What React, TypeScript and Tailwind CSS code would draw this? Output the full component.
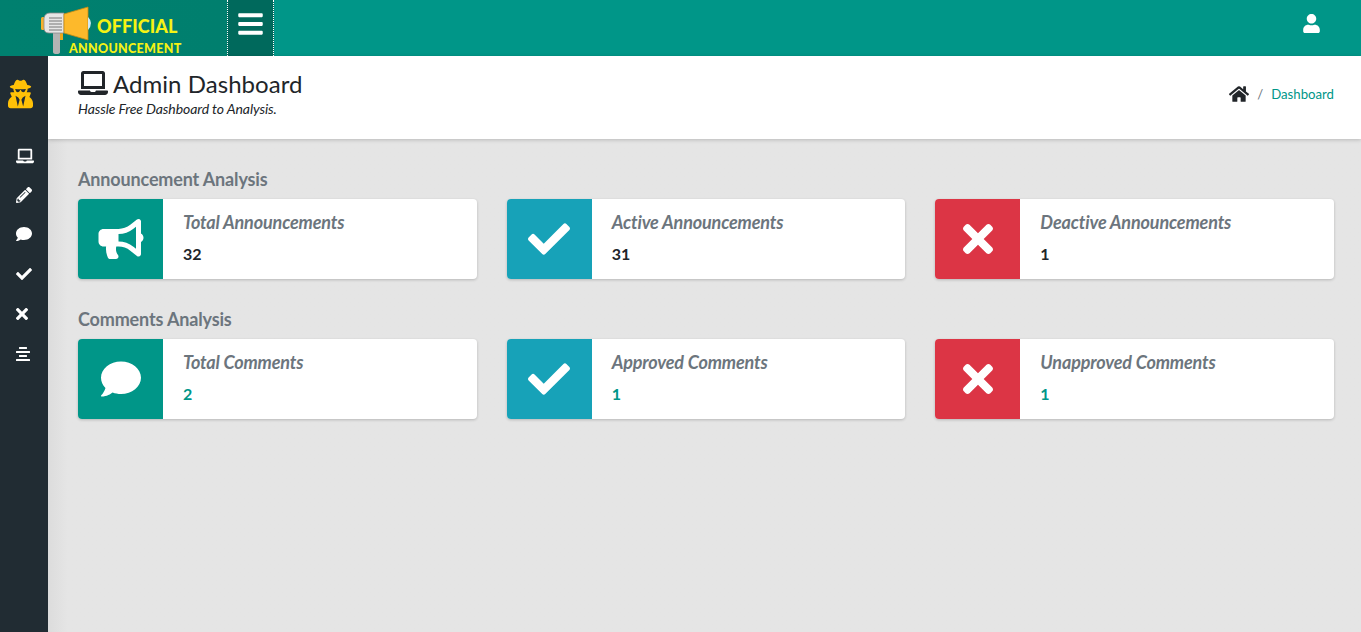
import React from 'react';
import {
  FaAlignCenter,
  FaBars,
  FaBullhorn,
  FaCheck,
  FaComment,
  FaHome,
  FaLaptop,
  FaPencilAlt,
  FaTimes,
  FaUser,
  FaUserSecret,
} from 'react-icons/fa';
import type { IconType } from 'react-icons';

interface StatCardProps {
  icon: IconType;
  iconBg: string;
  iconSize: string;
  title: string;
  value: string;
  valueColor: string;
}

const StatCard: React.FC<StatCardProps> = ({ icon: Icon, iconBg, iconSize, title, value, valueColor }) => (
  <div className="flex h-20 overflow-hidden rounded-[4px] bg-white shadow-[0_1px_3px_rgba(0,0,0,0.2)]">
    <div className={`flex w-[85px] shrink-0 items-center justify-center text-white ${iconBg}`}>
      <Icon className={iconSize} />
    </div>
    <div className="pl-[20px] pt-[12px]">
      <div className="text-[18px] leading-[23px] font-bold italic tracking-[-0.15px] text-[#6c757d]">{title}</div>
      <div className={`mt-[10px] text-[16px] leading-[20px] font-bold ${valueColor}`}>{value}</div>
    </div>
  </div>
);

const Logo = () => (
  <div className="relative h-14 w-[227px] shrink-0 overflow-hidden bg-gradient-to-r from-[#00806f] to-[#007f6e]">
    {/* megaphone */}
    <svg className="absolute left-[40px] top-[6px]" width="54" height="50" viewBox="0 0 54 50">
      <path d="M13 27 H20 V46 Q20 48 16.5 48 Q13 48 13 46 Z" fill="#b4b4b4" />
      <rect x="20" y="27" width="3" height="7" fill="#f0a818" />
      <rect x="1" y="11" width="4" height="13" rx="1.5" fill="#f5b02c" />
      <path d="M4 12 Q5 7 10 7 H24 V27 H9 Q4 27 4 22 Z" fill="#e6e6e6" stroke="#8a8a8a" strokeWidth="0.8" />
      <path d="M9 12H22M9 15H22M9 18H22M9 21H22M9 24H22" stroke="#777" strokeWidth="1.1" />
      <path d="M24 8 L48 1 V34 L24 27 Z" fill="#fdb92b" stroke="#c98a10" strokeWidth="0.8" />
      <path d="M48 11 Q54 17 48 24 Z" fill="#cfeaf5" />
    </svg>
    <div className="absolute left-[97px] top-[15px] text-[18px] leading-[22px] font-black tracking-[0.1px] text-[#f5f214]">
      OFFICIAL
    </div>
    <div className="absolute left-[69px] top-[41px] text-[12.5px] leading-[15px] font-black tracking-[0.3px] text-[#f5f214]">
      ANNOUNCEMENT
    </div>
  </div>
);

const Header = () => (
  <header className="flex h-14 shrink-0 items-stretch bg-[#009688]">
    <Logo />
    <div className="flex w-[47px] items-center justify-center border-x border-dotted border-x-white bg-[#00695c] pb-[9px] text-white">
      <FaBars className="h-[28px] w-[25px]" />
    </div>
    <div className="flex flex-1 items-center justify-end pb-[9px] pr-[40px] text-white">
      <FaUser className="h-[19px] w-[19px]" />
    </div>
  </header>
);

const Sidebar = () => (
  <aside className="z-10 flex w-12 shrink-0 flex-col items-start bg-[#212c33] pt-[23px] text-white">
    <FaUserSecret className="ml-[8px] h-[30px] w-[25px] text-[#ffc107]" />
    <div className="ml-[16px] mt-[38px] flex flex-col items-start gap-[22px]">
      <FaLaptop className="h-[18px] w-[18px]" />
      <FaPencilAlt className="h-[16px] w-[16px]" />
      <FaComment className="h-[18px] w-[16px]" />
      <FaCheck className="h-[18px] w-[16px]" />
      <FaTimes className="h-[18px] w-[12px]" />
      <FaAlignCenter className="h-[18px] w-[14px]" />
    </div>
  </aside>
);

export default function App() {
  return (
    <div
      className="flex h-[632px] w-[1361px] flex-col overflow-hidden bg-[#e5e5e5] text-[#212529]"
      style={{ fontFamily: '"Lato", sans-serif' }}
    >
      <Header />
      <div className="flex min-h-0 flex-1">
        <Sidebar />
        <main className="flex-1 bg-gradient-to-r from-[#dcdcdc] from-0% to-[#e5e5e5] to-[1.5%]">
          <div className="flex h-[83px] items-center justify-between bg-white pb-[8px] pl-[30px] pr-[27px] shadow-[0_1px_4px_rgba(0,0,0,0.2)]">
            <div>
              <div className="flex items-center text-[24px] leading-[29px] tracking-[0.05px]">
                <FaLaptop className="mr-[5px] h-[30px] w-[30px]" />
                Admin Dashboard
              </div>
              <div className="text-[14px] leading-[21px] italic tracking-[-0.09px]">Hassle Free Dashboard to Analysis.</div>
            </div>
            <div className="mt-[2px] flex items-center text-[13.2px]">
              <FaHome className="h-[18px] w-[20px]" />
              <span className="mx-[8px] text-[#6c757d]">/</span>
              <span className="text-[#009688]">Dashboard</span>
            </div>
          </div>

          <div className="pl-[30px] pr-[27px] pt-[28px]">
            <h2 className="text-[18px] leading-[24px] font-bold tracking-[-0.15px] text-[#6c757d]">Announcement Analysis</h2>
            <div className="mt-[8px] grid grid-cols-3 gap-[30px]">
              <StatCard icon={FaBullhorn} iconBg="bg-[#009688]" iconSize="h-[40px] w-[46px]" title="Total Announcements" value="32" valueColor="text-[#212529]" />
              <StatCard icon={FaCheck} iconBg="bg-[#17a2b8]" iconSize="h-[42px] w-[42px]" title="Active Announcements" value="31" valueColor="text-[#212529]" />
              <StatCard icon={FaTimes} iconBg="bg-[#dc3545]" iconSize="h-[44px] w-[30px]" title="Deactive Announcements" value="1" valueColor="text-[#212529]" />
            </div>

            <h2 className="mt-[28px] text-[18px] leading-[24px] font-bold tracking-[-0.15px] text-[#6c757d]">Comments Analysis</h2>
            <div className="mt-[8px] grid grid-cols-3 gap-[30px]">
              <StatCard icon={FaComment} iconBg="bg-[#009688]" iconSize="h-[40px] w-[42px]" title="Total Comments" value="2" valueColor="text-[#009688]" />
              <StatCard icon={FaCheck} iconBg="bg-[#17a2b8]" iconSize="h-[42px] w-[42px]" title="Approved Comments" value="1" valueColor="text-[#009688]" />
              <StatCard icon={FaTimes} iconBg="bg-[#dc3545]" iconSize="h-[44px] w-[30px]" title="Unapproved Comments" value="1" valueColor="text-[#009688]" />
            </div>
          </div>
        </main>
      </div>
    </div>
  );
}
